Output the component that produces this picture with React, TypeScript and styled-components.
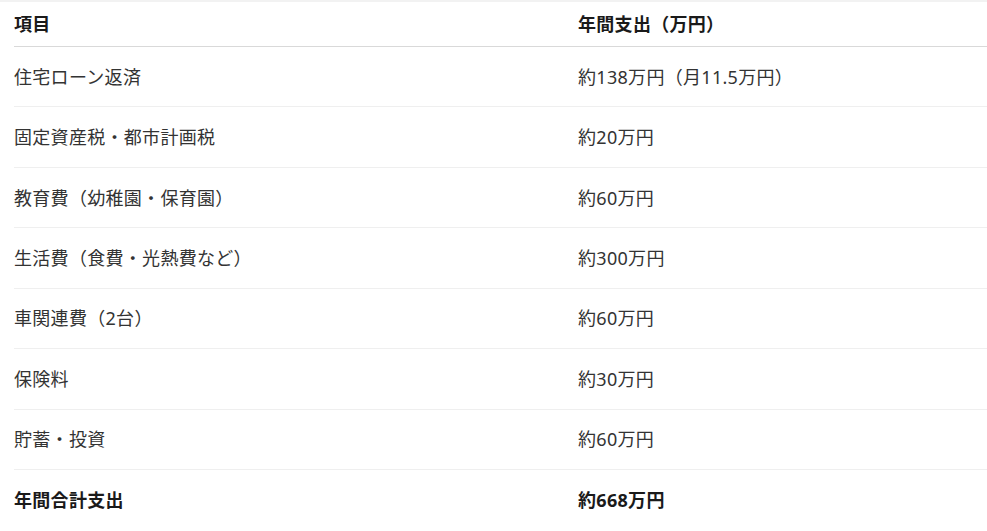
import styled, { createGlobalStyle } from "styled-components";

const GlobalStyle = createGlobalStyle`
  body {
    margin: 0;
    background: #fff;
    font-family: "Noto Sans", "Noto Sans CJK JP", sans-serif;
  }
`;

const Wrapper = styled.div`
  border-top: 2px solid #f2f2f2;
  padding: 0 0 0 14px;
  overflow: hidden;
  height: 529px;
`;

const Table = styled.div`
  width: 973px;
`;

const Row = styled.div<{ $head?: boolean; $last?: boolean }>`
  display: grid;
  grid-template-columns: 564px 1fr;
  align-items: center;
  height: ${(p) => (p.$head ? "45px" : "60.43px")};
  border-bottom: 1px solid ${(p) => (p.$head ? "#d9d9d9" : p.$last ? "transparent" : "#efefef")};
  box-sizing: border-box;
`;

const Cell = styled.div<{ $bold?: boolean }>`
  font-size: 18px;
  line-height: 24px;
  letter-spacing: 0.3px;
  color: ${(p) => (p.$bold ? "#1a1a1a" : "#333")};
  font-weight: ${(p) => (p.$bold ? 700 : 400)};
  white-space: nowrap;
`;

const rows = [
  ["住宅ローン返済", "約138万円（月11.5万円）"],
  ["固定資産税・都市計画税", "約20万円"],
  ["教育費（幼稚園・保育園）", "約60万円"],
  ["生活費（食費・光熱費など）", "約300万円"],
  ["車関連費（2台）", "約60万円"],
  ["保険料", "約30万円"],
  ["貯蓄・投資", "約60万円"],
];

function App() {
  return (
    <>
      <GlobalStyle />
      <Wrapper>
        <Table>
          <Row $head>
            <Cell $bold>項目</Cell>
            <Cell $bold>年間支出（万円）</Cell>
          </Row>
          {rows.map(([item, cost]) => (
            <Row key={item}>
              <Cell>{item}</Cell>
              <Cell>{cost}</Cell>
            </Row>
          ))}
          <Row $last>
            <Cell $bold>年間合計支出</Cell>
            <Cell $bold>約668万円</Cell>
          </Row>
        </Table>
      </Wrapper>
    </>
  );
}

export default App;
